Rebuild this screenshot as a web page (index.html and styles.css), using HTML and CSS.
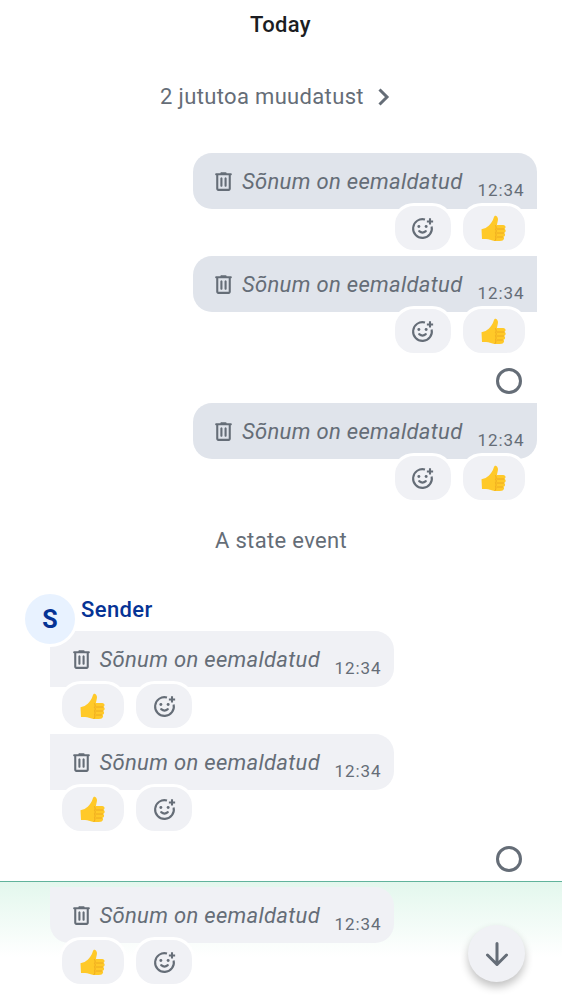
FILE: index.html
```
<!DOCTYPE html>
<html lang="et">
<head>
<meta charset="utf-8">
<title>Timeline</title>
<link rel="stylesheet" href="styles.css">
</head>
<body>
<svg class="defs" aria-hidden="true">
  <symbol id="trash" viewBox="0 0 24 24"><path fill="currentColor" d="M7 21q-.824 0-1.412-.587A1.93 1.93 0 0 1 5 19V6a.97.97 0 0 1-.713-.287A.97.97 0 0 1 4 5q0-.424.287-.713A.97.97 0 0 1 5 4h4q0-.424.287-.712A.97.97 0 0 1 10 3h4q.424 0 .713.288Q15 3.575 15 4h4q.424 0 .712.287Q20 4.576 20 5t-.288.713A.97.97 0 0 1 19 6v13q0 .824-.587 1.413A1.93 1.93 0 0 1 17 21zM7 6v13h10V6zm2 10q0 .424.287.712Q9.576 17 10 17t.713-.288A.97.97 0 0 0 11 16V9a.97.97 0 0 0-.287-.713A.97.97 0 0 0 10 8a.97.97 0 0 0-.713.287A.97.97 0 0 0 9 9zm4 0q0 .424.287.712.288.288.713.288.424 0 .713-.288A.97.97 0 0 0 15 16V9a.97.97 0 0 0-.287-.713A.97.97 0 0 0 14 8a.97.97 0 0 0-.713.287A.97.97 0 0 0 13 9z"/></symbol>
  <symbol id="react" viewBox="0 0 24 24"><g fill="none" stroke="currentColor" stroke-width="2"><path d="M14.400 3.350A9 9 0 1 0 20.750 10"/><path stroke-linecap="round" d="M8.800 14.500q3.200 2.800 6.400 0"/><path d="M19.200 2.200v6M16.200 5.200h6"/></g><circle cx="8.500" cy="10" r="1.400" fill="currentColor"/><circle cx="15.500" cy="10" r="1.400" fill="currentColor"/></symbol>
  <symbol id="thumb" viewBox="0 0 25 27"><path fill="#ffc928" d="M.5 14.2q4.8-.7 7.2-3.4c2.3-2.5 4.2-5 5-8.1C13.300.8 14.200.4 15.200.9c1.500.8 2 2.500 1.700 4.300l-1 4.800h6.300c2.700 0 3 3 1.200 3.800 1.900 1 1.500 3.600-.2 4.100 1.500 1.200 1 3.300-.7 3.800 1.300 1.700.2 3.700-1.800 4-3.700.5-8.400.5-11.700-.9-2.400-.9-5-.7-8-.8z"/><path fill="none" stroke="#eeaa20" stroke-width="1" stroke-linecap="round" d="M14.600 10.700c.9 1.700.6 2.700-.1 3.500 1 1.100.9 2.700 0 3.700.8 1.300.7 2.700 0 3.900.6 1.400.5 2.800-.6 3.900M16 14h7M16 18h6.500M16 22h5.500"/></symbol>
  <symbol id="down" viewBox="0 0 24 24"><path fill="none" stroke="currentColor" stroke-width="3" stroke-linecap="round" stroke-linejoin="round" d="M12 1.500v21M2.500 13l9.500 9.500 9.500-9.500"/></symbol>
</svg>
<main class="timeline">
  <h1 class="day">Today</h1>
  <p class="state group-header">2 jututoa muudatust<svg class="chevron" viewBox="0 0 12 18"><path d="M1.500 1.500L9 9l-7.500 7.500"/></svg></p>

  <article class="message mine first">
    <div class="bubble"><svg class="trash"><use href="#trash"/></svg><em>Sõnum on eemaldatud</em><time>12:34</time></div>
    <div class="reactions"><span class="chip add"><svg><use href="#react"/></svg></span><span class="chip emoji"><svg><use href="#thumb"/></svg></span></div>
  </article>
  <article class="message mine middle">
    <div class="bubble"><svg class="trash"><use href="#trash"/></svg><em>Sõnum on eemaldatud</em><time>12:34</time></div>
    <div class="reactions"><span class="chip add"><svg><use href="#react"/></svg></span><span class="chip emoji"><svg><use href="#thumb"/></svg></span></div>
  </article>
  <div class="sending"><i></i></div>
  <article class="message mine last">
    <div class="bubble"><svg class="trash"><use href="#trash"/></svg><em>Sõnum on eemaldatud</em><time>12:34</time></div>
    <div class="reactions"><span class="chip add"><svg><use href="#react"/></svg></span><span class="chip emoji"><svg><use href="#thumb"/></svg></span></div>
  </article>

  <p class="state event">A state event</p>

  <header class="sender"><span class="avatar">S</span><span class="name">Sender</span></header>
  <article class="message first">
    <div class="bubble"><svg class="trash"><use href="#trash"/></svg><em>Sõnum on eemaldatud</em><time>12:34</time></div>
    <div class="reactions"><span class="chip emoji"><svg><use href="#thumb"/></svg></span><span class="chip add"><svg><use href="#react"/></svg></span></div>
  </article>
  <article class="message middle">
    <div class="bubble"><svg class="trash"><use href="#trash"/></svg><em>Sõnum on eemaldatud</em><time>12:34</time></div>
    <div class="reactions"><span class="chip emoji"><svg><use href="#thumb"/></svg></span><span class="chip add"><svg><use href="#react"/></svg></span></div>
  </article>
  <div class="sending"><i></i></div>
  <section class="focused">
    <article class="message last">
      <div class="bubble"><svg class="trash"><use href="#trash"/></svg><em>Sõnum on eemaldatud</em><time>12:34</time></div>
      <div class="reactions"><span class="chip emoji"><svg><use href="#thumb"/></svg></span><span class="chip add"><svg><use href="#react"/></svg></span></div>
    </article>
  </section>
  <button class="jump" aria-label="Jump to bottom"><svg><use href="#down"/></svg></button>
</main>
</body>
</html>
```
FILE: styles.css
```
* { box-sizing: border-box; }
body {
  margin: 0;
  background: #fff;
  color: #656d77;
  font-family: Roboto, "Liberation Sans", sans-serif;
  font-size: 22px;
}
svg { display: block; flex: none; }
.defs { position: absolute; width: 0; height: 0; }
.timeline {
  position: relative;
  width: 562px;
  height: 1000px;
  overflow: hidden;
}
.day {
  margin: 0;
  height: 50px;
  line-height: 50px;
  text-align: center;
  padding-right: 1px;
  font-size: 22px;
  font-weight: 500;
  letter-spacing: 0.35px;
  color: #1b1d22;
}
.state {
  margin: 0;
  display: flex;
  align-items: center;
  justify-content: center;
  letter-spacing: 0.34px;
}
.group-header { height: 93px; margin-bottom: 10px; padding-right: 12px; }
.chevron { width: 12px; height: 18px; margin-left: 14px; }
.chevron path { fill: none; stroke: currentColor; stroke-width: 3; }
.event { height: 68px; }
.message {
  display: flex;
  flex-direction: column;
  align-items: flex-start;
  height: 103px;
  padding-left: 50px;
}
.mine { align-items: flex-end; padding: 0 25px 0 0; }
.bubble {
  display: flex;
  align-items: center;
  width: 344px;
  height: 56px;
  flex: none;
  padding: 0 12.5px 0 18.5px;
  border-radius: 19px;
  background: #f0f1f5;
}
.mine .bubble { width: 344.5px; background: #e0e4eb; }
.first .bubble { border-radius: 0 19px 19px 0; }
.middle .bubble { border-radius: 0 19px 19px 0; }
.last .bubble { border-radius: 0 19px 19px 19px; }
.mine.first .bubble { border-radius: 19px 19px 0 19px; }
.mine.middle .bubble { border-radius: 19px 0 0 19px; }
.mine.last .bubble { border-radius: 19px 0 19px 19px; }
.trash { width: 25px; height: 25px; margin-right: 6px; }
.bubble em { letter-spacing: 0.32px; white-space: nowrap; }
.bubble time {
  margin: 18px 0 0 auto;
  font-size: 17px;
  line-height: 20px;
  letter-spacing: 0.95px;
}
.reactions {
  display: flex;
  gap: 6px;
  margin-top: -6px;
  padding: 0 9px;
}
.mine .reactions { padding-right: 9.5px; }
.chip {
  display: flex;
  align-items: center;
  justify-content: center;
  width: 62px;
  height: 50px;
  border: 3px solid #fff;
  border-radius: 22px;
  background: #f0f1f5;
}
.emoji { width: 68px; }
.add svg { width: 25px; height: 25px; }
.emoji svg { width: 25px; height: 27px; margin-right: 1px; }
.sending {
  display: flex;
  justify-content: flex-end;
  align-items: center;
  height: 44px;
  padding-right: 40px;
}
.sending i {
  width: 26px;
  height: 26px;
  border: 3px solid #656d77;
  border-radius: 50%;
}
.sender {
  position: relative;
  z-index: 1;
  display: flex;
  height: 47px;
  padding-left: 22px;
  margin: 20px 0 -10px;
}
.avatar {
  display: flex;
  align-items: center;
  justify-content: center;
  width: 56px;
  height: 56px;
  flex: none;
  margin-top: -3px;
  border: 3px solid #fff;
  border-radius: 50%;
  background: #e8f2ff;
  color: #053395;
  font-size: 25px;
  font-weight: 700;
}
.name {
  margin-left: 3px;
  line-height: 32px;
  font-weight: 500;
  letter-spacing: 0.4px;
  color: #053395;
}
.focused {
  height: 119px;
  padding-top: 5px;
  border-top: 1px solid #61b39c;
  background: linear-gradient(#e3f7ed, #fff 75px);
}
.jump {
  position: absolute;
  left: 468px;
  top: 925px;
  display: flex;
  align-items: center;
  justify-content: center;
  width: 57px;
  height: 57px;
  padding: 0;
  border: 0;
  border-radius: 50%;
  background: #f0f1f5;
  color: #656d77;
  box-shadow: 0 5px 9px rgba(0, 0, 0, 0.24);
}
.jump svg { width: 24px; height: 24px; }
```
